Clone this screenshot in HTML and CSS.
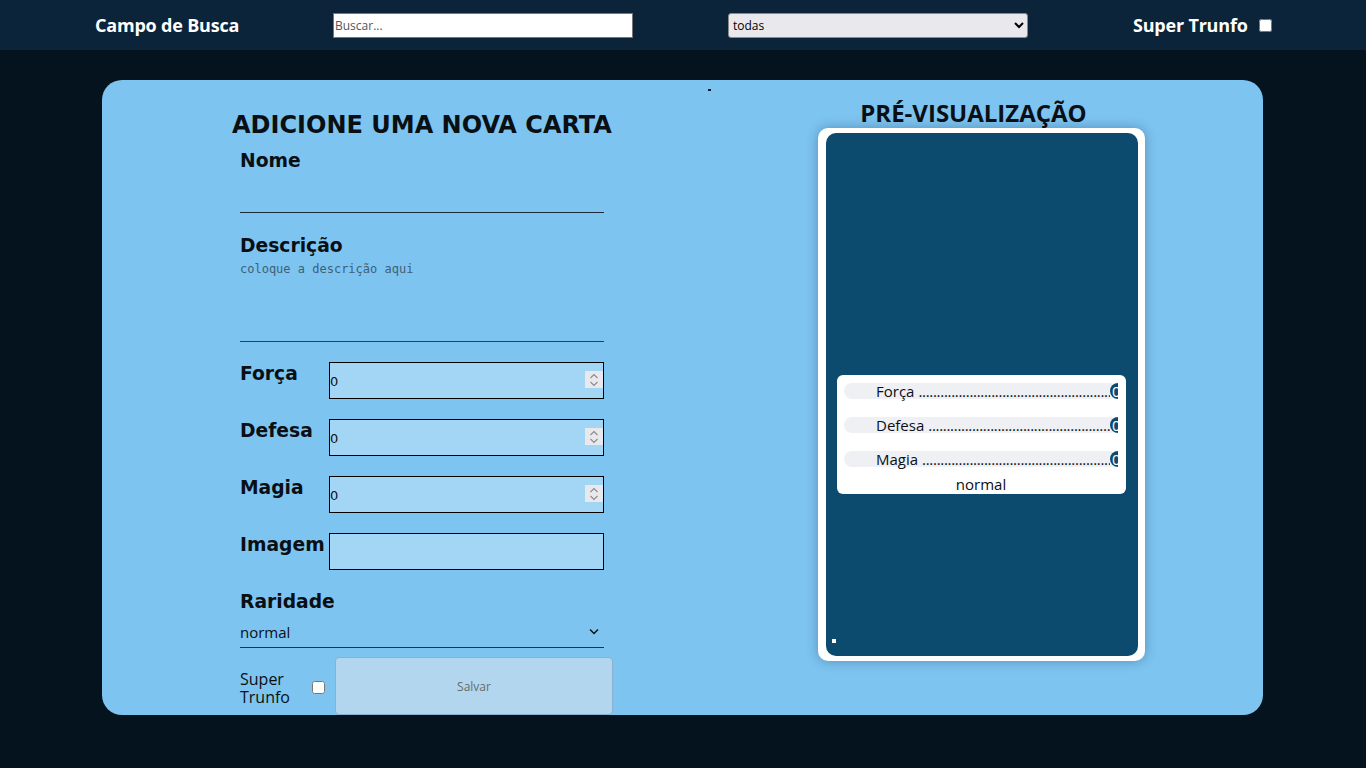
FILE: index.html
```html
<!DOCTYPE html>
<html lang="pt-BR">
<head>
<meta charset="utf-8">
<title>Tryunfo</title>
<link rel="stylesheet" href="styles.css">
</head>
<body>
<header class="topbar">
  <span class="top-title">Campo de Busca</span>
  <input class="search" type="text" placeholder="Buscar...">
  <select class="filter"><option>todas</option></select>
  <label class="top-trunfo">Super Trunfo <input type="checkbox" class="chk"></label>
</header>

<main class="panel">
  <section class="form-col">
    <h2 class="form-title">ADICIONE UMA NOVA CARTA</h2>
    <form class="form">
      <label class="lbl">Nome</label>
      <input class="line-input" type="text">
      <label class="lbl lbl-desc">Descrição</label>
      <textarea class="line-area" placeholder="coloque a descrição aqui"></textarea>

      <div class="attrs">
        <label class="lbl">Força</label>
        <div class="num-wrap">
          <input class="box-input" type="text" value="0">
          <span class="spin"><svg width="10" height="14" viewBox="0 0 10 14"><path d="M1.5 5 L5 1.5 L8.5 5 M1.5 9 L5 12.5 L8.5 9" fill="none" stroke="#8a8a90" stroke-width="1.1"/></svg></span>
        </div>
        <label class="lbl">Defesa</label>
        <div class="num-wrap">
          <input class="box-input" type="text" value="0">
          <span class="spin"><svg width="10" height="14" viewBox="0 0 10 14"><path d="M1.5 5 L5 1.5 L8.5 5 M1.5 9 L5 12.5 L8.5 9" fill="none" stroke="#8a8a90" stroke-width="1.1"/></svg></span>
        </div>
        <label class="lbl">Magia</label>
        <div class="num-wrap">
          <input class="box-input" type="text" value="0">
          <span class="spin"><svg width="10" height="14" viewBox="0 0 10 14"><path d="M1.5 5 L5 1.5 L8.5 5 M1.5 9 L5 12.5 L8.5 9" fill="none" stroke="#8a8a90" stroke-width="1.1"/></svg></span>
        </div>
        <label class="lbl">Imagem</label>
        <input class="box-input" type="text">
      </div>

      <label class="lbl lbl-rar">Raridade</label>
      <div class="rar-select">
        <span>normal</span>
        <svg width="10" height="7" viewBox="0 0 10 7"><path d="M1 1.5 L5 5.5 L9 1.5" fill="none" stroke="#111" stroke-width="1.5"/></svg>
      </div>

      <div class="bottom-row">
        <span class="st-text">Super<br>Trunfo</span>
        <input type="checkbox" class="chk chk-form">
        <button type="button" class="save" disabled>Salvar</button>
      </div>
    </form>
  </section>

  <span class="tick"></span>

  <section class="preview-col">
    <h2 class="preview-title">PRÉ-VISUALIZAÇÃO</h2>
    <div class="card">
      <div class="card-inner">
        <div class="stats">
          <div class="stat"><span class="stat-name">Força</span><span class="dots">..............................................................................................</span><span class="val">0</span></div>
          <div class="stat"><span class="stat-name">Defesa</span><span class="dots">..............................................................................................</span><span class="val">0</span></div>
          <div class="stat"><span class="stat-name">Magia</span><span class="dots">..............................................................................................</span><span class="val">0</span></div>
          <div class="rarity">normal</div>
        </div>
        <span class="dot-sq"></span>
      </div>
    </div>
  </section>
</main>
</body>
</html>
```

FILE: styles.css
```css
* { box-sizing: border-box; }

html, body {
  margin: 0;
  padding: 0;
  background: #04131e;
  height: 100%;
}

body {
  font-family: "Open Sans", "DejaVu Sans", sans-serif;
  overflow: hidden;
}

.topbar {
  height: 50px;
  background: #0b2439;
  display: flex;
  align-items: center;
  padding: 0 0 0 95px;
}

.top-title {
  color: #fff;
  font-weight: 700;
  font-size: 18px;
  letter-spacing: -0.2px;
  width: 143px;
  white-space: nowrap;
}

.search {
  width: 300px;
  height: 25px;
  margin: 0 0 0 95px;
  border: 1px solid #767676;
  background: #fff;
  padding: 0 1px;
  font-family: "Open Sans", sans-serif;
  font-size: 12px;
}
.search::placeholder { color: #555; }

.filter {
  width: 300px;
  height: 25px;
  margin: 0 0 0 95px;
  background: #e9e8ed;
  border: 1px solid #8a8a8a;
  border-radius: 3px;
  font-family: "Open Sans", sans-serif;
  font-size: 12px;
  color: #000;
  padding: 0;
}

.top-trunfo {
  margin-left: 105px;
  color: #fff;
  font-weight: 700;
  font-size: 18px;
  letter-spacing: -0.2px;
  display: flex;
  align-items: center;
  gap: 11px;
  white-space: nowrap;
}

.chk {
  width: 13px;
  height: 13px;
  margin: 0;
}

.panel {
  margin: 30px 103px 0 102px;
  height: 635px;
  background: #7dc4f0;
  border-radius: 20px;
  display: flex;
  align-items: flex-start;
  padding-left: 130px;
  position: relative;
  overflow: hidden;
}

.form-col {
  width: 380px;
  padding-top: 31px;
}

.form-title {
  margin: 0;
  font-family: "DejaVu Sans", sans-serif;
  font-size: 24px;
  font-weight: 700;
  color: #0a0f14;
  text-align: center;
  line-height: 28px;
  white-space: nowrap;
}

.form {
  width: 364px;
  margin-left: 8px;
  display: flex;
  flex-direction: column;
}

.lbl {
  font-family: "DejaVu Sans", sans-serif;
  font-weight: 700;
  font-size: 18.72px;
  line-height: 22px;
  color: #0a0f14;
}

.form > .lbl:first-child { margin-top: 11px; }

.line-input {
  height: 41px;
  border: none;
  border-bottom: 1px solid #1a2a3a;
  background: transparent;
  margin: 0;
}

.lbl-desc { margin-top: 22px; }

.line-area {
  height: 85px;
  resize: none;
  border: none;
  border-bottom: 1px solid #2a4055;
  background: transparent;
  margin: 0;
  padding: 5px 0 0;
  font-family: "DejaVu Sans Mono", monospace;
  font-size: 12px;
}
.line-area::placeholder { color: #3f5f78; }

.attrs {
  margin-top: 20px;
  display: grid;
  grid-template-columns: 89px 1fr;
  row-gap: 20px;
  align-items: start;
}

.attrs .lbl { padding-top: 1px; }

.num-wrap {
  position: relative;
  height: 37px;
}

.num-wrap .box-input { width: 100%; }

.spin {
  position: absolute;
  right: 1px;
  top: 9px;
  width: 18px;
  height: 17px;
  background: #e9e9ed;
  display: flex;
  align-items: center;
  justify-content: center;
}

.box-input {
  height: 37px;
  margin: 0;
  border: 1px solid #000;
  background: #a3d6f5;
  padding: 2px 0 0;
  font-family: "DejaVu Sans", sans-serif;
  font-size: 13px;
  color: #111;
}

.lbl-rar { margin-top: 21px; }

.rar-select {
  height: 35px;
  display: flex;
  align-items: center;
  justify-content: space-between;
  padding: 3px 5px 0 0;
  border-bottom: 1px solid #1d3448;
  font-size: 15px;
  color: #0a0f14;
}

.bottom-row {
  margin-top: 10px;
  display: flex;
  align-items: center;
  height: 58px;
}

.st-text {
  font-size: 16px;
  line-height: 18px;
  color: #0a0f14;
  width: 72px;
  flex-shrink: 0;
  padding-top: 1px;
}

.chk-form { margin-right: 10px; flex-shrink: 0; margin-top: 1px; }

.save {
  width: 278px;
  flex-shrink: 0;
  height: 58px;
  align-self: flex-start;
  margin-top: -1px;
  background: #b3d6ef;
  border: 1px solid #8ab1cf;
  border-radius: 4px;
  color: #666b70;
  font-family: "Open Sans", sans-serif;
  font-size: 12px;
  padding: 0;
}

.tick {
  position: absolute;
  left: 606px;
  top: 9px;
  width: 3px;
  height: 2px;
  background: #0a1a28;
}

.preview-col {
  margin-left: 206px;
  width: 327px;
  padding-top: 17px;
}

.preview-title {
  margin: 0;
  text-align: center;
  font-size: 24px;
  font-weight: 700;
  line-height: 31px;
  color: #0a0f14;
  padding-right: 16px;
  white-space: nowrap;
}

.card {
  background: #fff;
  border-radius: 10px;
  padding: 5px 7px 5px 8px;
  height: 533px;
  box-shadow: 0 0 12px rgba(10, 50, 80, 0.35);
}

.card-inner {
  background: #0c4a6e;
  border-radius: 10px;
  height: 100%;
  padding: 242px 12px 0 11px;
  position: relative;
}

.stats {
  background: #fff;
  border-radius: 6px;
  height: 119px;
  padding: 8px 8px 0 7px;
}

.stat {
  height: 16px;
  margin-bottom: 18px;
  background: #eff0f4;
  border-radius: 8px;
  display: flex;
  align-items: center;
  padding-left: 32px;
  font-size: 15px;
  color: #0a0f14;
  white-space: nowrap;
}

.stat-name { padding-right: 4px; }

.dots {
  flex: 1;
  overflow: hidden;
  letter-spacing: -0.3px;
}

.val {
  width: 8px;
  height: 16px;
  background: #0c4a6e;
  color: #fff;
  border-radius: 8px 0 0 8px;
  font-size: 15px;
  line-height: 16px;
  padding-left: 2px;
  overflow: hidden;
}

.rarity {
  text-align: center;
  font-size: 15px;
  line-height: 18px;
  margin-top: -10px;
  color: #0a0f14;
}

.dot-sq {
  position: absolute;
  left: 6px;
  bottom: 13px;
  width: 4px;
  height: 4px;
  background: #fff;
}
```
